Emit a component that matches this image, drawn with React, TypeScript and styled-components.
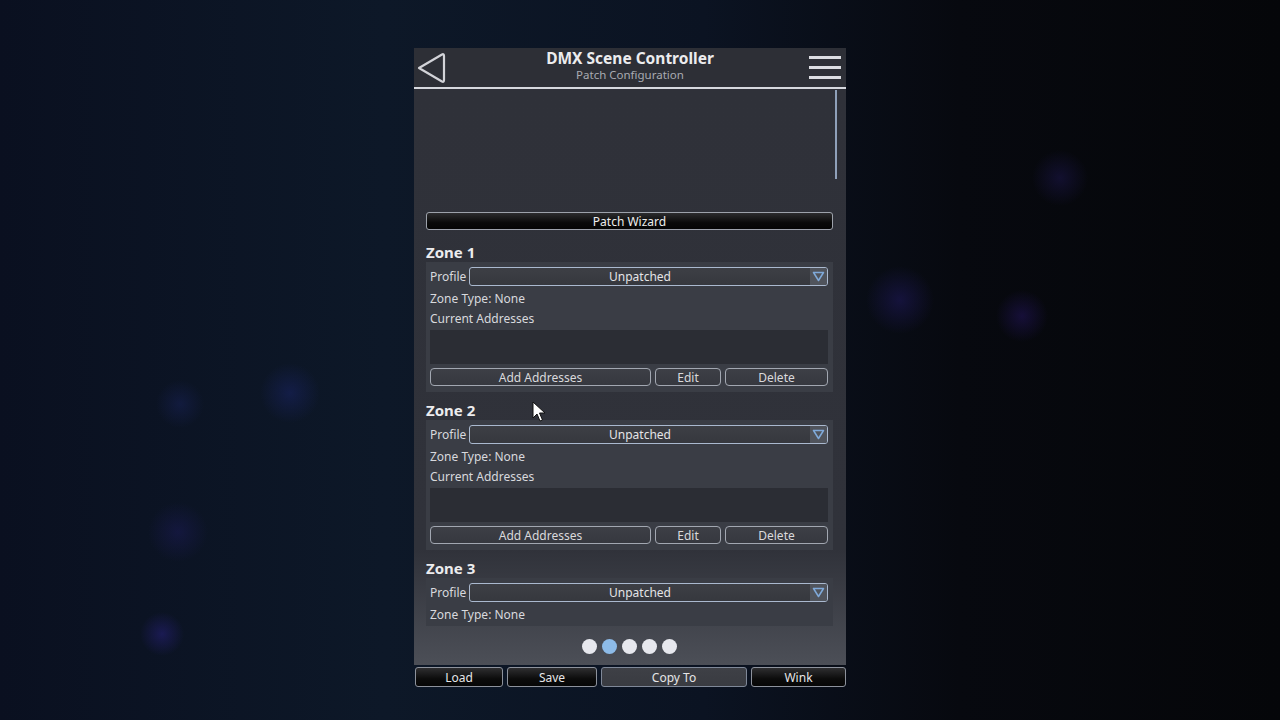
import React from "react";
import styled, { createGlobalStyle } from "styled-components";

const GlobalStyle = createGlobalStyle`
  html, body {
    margin: 0;
    padding: 0;
    height: 720px;
    overflow: hidden;
  }
  body {
    font-family: "Noto Sans", "DejaVu Sans", sans-serif;
    background-color: #080c15;
    background-image:
      radial-gradient(circle at 1060px 178px, rgba(40, 30, 110, 0.35) 0, rgba(40, 30, 110, 0) 28px),
      radial-gradient(circle at 900px 300px, rgba(40, 30, 120, 0.4) 0, rgba(40, 30, 120, 0) 34px),
      radial-gradient(circle at 1022px 316px, rgba(45, 25, 120, 0.4) 0, rgba(45, 25, 120, 0) 26px),
      radial-gradient(circle at 180px 404px, rgba(30, 40, 110, 0.35) 0, rgba(30, 40, 110, 0) 24px),
      radial-gradient(circle at 290px 393px, rgba(30, 40, 120, 0.4) 0, rgba(30, 40, 120, 0) 30px),
      radial-gradient(circle at 178px 532px, rgba(35, 30, 110, 0.35) 0, rgba(35, 30, 110, 0) 30px),
      radial-gradient(circle at 162px 634px, rgba(45, 35, 140, 0.45) 0, rgba(45, 35, 140, 0) 22px),
      linear-gradient(90deg, #0a1020 0%, #0d1828 30%, #0b1322 55%, #07090f 75%, #050609 100%);
  }
`;

const Stage = styled.div`
  width: 1280px;
  height: 720px;
  padding: 48px 0 0 414px;
  box-sizing: border-box;
`;

const Phone = styled.div`
  width: 432px;
  height: 640px;
  display: flex;
  flex-direction: column;
`;

const Header = styled.header`
  height: 39px;
  background: #2d2f36;
  border-bottom: 2px solid #d6d8de;
  display: flex;
  align-items: center;
  justify-content: space-between;
  padding: 0 4px 0 0;
`;

const TitleBlock = styled.div`
  display: flex;
  flex-direction: column;
  align-items: center;
  margin: -5px 0 0 4px;
`;

const Title = styled.div`
  font-size: 15.5px;
  font-weight: 700;
  color: #ececee;
  line-height: 18px;
`;

const Subtitle = styled.div`
  font-size: 11.5px;
  color: #a9abb2;
  line-height: 15px;
`;

const IconButton = styled.div`
  width: 34px;
  height: 34px;
  display: flex;
  align-items: center;
  justify-content: center;
`;

const Panel = styled.div`
  flex: 1;
  display: flex;
  flex-direction: column;
  position: relative;
  background: linear-gradient(180deg, #2f3139 0%, #30323a 80%, #4c4f57 100%);
`;

const ScrollIndicator = styled.div`
  position: absolute;
  right: 9px;
  top: 1px;
  width: 2px;
  height: 89px;
  background: #8fa0b9;
`;

const Viewport = styled.div`
  height: 537px;
  overflow: hidden;
  padding: 123px 13px 0 12px;
  box-sizing: border-box;
`;

const WizardButton = styled.div`
  height: 18px;
  border: 1px solid #9da2ab;
  border-radius: 3px;
  background: linear-gradient(180deg, #2c2c2e 0%, #0a0a0a 60%, #050505 100%);
  color: #eeeeee;
  font-size: 12px;
  display: flex;
  align-items: center;
  justify-content: center;
  box-sizing: border-box;
`;

const ZoneBlock = styled.section`
  margin-top: 9px;
  &:first-of-type {
    margin-top: 13px;
  }
`;

const ZoneTitle = styled.h2`
  margin: 0;
  height: 19px;
  font-size: 15px;
  line-height: 19px;
  font-weight: 700;
  color: #ececee;
`;

const Card = styled.div`
  background: #3a3d45;
  padding: 5px 5px 6px 4px;
`;

const ProfileRow = styled.div`
  display: flex;
  align-items: center;
  height: 19px;
  gap: 4px;
  margin-bottom: 2px;
`;

const Label = styled.span`
  font-size: 12px;
  color: #d8d9dd;
  width: 35px;
`;

const Select = styled.div`
  flex: 1;
  height: 19px;
  border: 1px solid #aab9cf;
  border-radius: 3px;
  background: linear-gradient(180deg, #3d3f45 0%, #36383e 100%);
  display: flex;
  align-items: stretch;
  box-sizing: border-box;
  overflow: hidden;
`;

const SelectText = styled.span`
  flex: 1;
  font-size: 12px;
  color: #e4e4e6;
  display: flex;
  align-items: center;
  justify-content: center;
`;

const Arrow = styled.span`
  width: 17px;
  background: #50545c;
  display: flex;
  align-items: center;
  justify-content: center;
`;

const InfoLine = styled.div`
  height: 20px;
  font-size: 12px;
  line-height: 21px;
  color: #d8d9dd;
`;

const AddressBox = styled.div`
  height: 34px;
  margin-top: 2px;
  background: #2b2d34;
`;

const ButtonRow = styled.div`
  display: grid;
  grid-template-columns: 221px 66px 1fr;
  gap: 4px;
  margin-top: 4px;
`;

const CardButton = styled.div`
  height: 18px;
  border: 1px solid #a2a7b1;
  border-radius: 4px;
  background: linear-gradient(180deg, #3d3f46 0%, #36383f 100%);
  color: #d9d9dc;
  font-size: 12px;
  display: flex;
  align-items: center;
  justify-content: center;
  box-sizing: border-box;
`;

const Dots = styled.div`
  flex: 1;
  display: flex;
  align-items: center;
  justify-content: center;
  gap: 5px;
  padding: 1px 2px 0 0;
`;

const Dot = styled.span<{ $active?: boolean }>`
  width: 15px;
  height: 15px;
  border-radius: 50%;
  background: ${(p) => (p.$active ? "#8dbbe8" : "#e7e8ee")};
`;

const Footer = styled.footer`
  display: grid;
  grid-template-columns: 88px 90px 146px 1fr;
  gap: 4px;
  padding: 2px 0 1px 1px;
  height: 23px;
  box-sizing: border-box;
`;

const FooterButton = styled.div<{ $selected?: boolean }>`
  height: 20px;
  border: 1px solid ${(p) => (p.$selected ? "#7f8898" : "#8d929c")};
  border-radius: 3px;
  background: ${(p) =>
    p.$selected
      ? "linear-gradient(180deg, #3e4046 0%, #393b41 100%)"
      : "linear-gradient(180deg, #2e2e30 0%, #0c0c0c 60%, #060606 100%)"};
  color: #e6e6e8;
  font-size: 12px;
  display: flex;
  align-items: center;
  justify-content: center;
  box-sizing: border-box;
`;

const Cursor = styled.svg`
  position: absolute;
  left: 118px;
  top: 312px;
`;

const BackIcon = () => (
  <svg width="32" height="36" viewBox="0 0 32 36">
    <path
      d="M4 18 L27 4.5 Q29 3.5 29 6 L29 30 Q29 32.5 27 31.5 Z"
      fill="none"
      stroke="#d2d3d8"
      strokeWidth="2.2"
      strokeLinejoin="round"
    />
  </svg>
);

const MenuIcon = () => (
  <svg width="34" height="30" viewBox="0 0 34 30">
    <rect x="1" y="3" width="32" height="3" fill="#dcdde2" />
    <rect x="1" y="13" width="32" height="3" fill="#dcdde2" />
    <rect x="1" y="23" width="32" height="3" fill="#dcdde2" />
  </svg>
);

const DropArrow = () => (
  <svg width="13" height="11" viewBox="0 0 13 11">
    <path
      d="M1.5 1.5 L11.5 1.5 L6.5 9.5 Z"
      fill="none"
      stroke="#7fa9d9"
      strokeWidth="1.5"
      strokeLinejoin="round"
    />
  </svg>
);

interface ZoneProps {
  n: number;
  partial?: boolean;
}

function Zone({ n, partial }: ZoneProps) {
  return (
    <ZoneBlock>
      <ZoneTitle>Zone {n}</ZoneTitle>
      <Card>
        <ProfileRow>
          <Label>Profile</Label>
          <Select>
            <SelectText>Unpatched</SelectText>
            <Arrow>
              <DropArrow />
            </Arrow>
          </Select>
        </ProfileRow>
        <InfoLine>Zone Type: None</InfoLine>
        {!partial && (
          <>
            <InfoLine>Current Addresses</InfoLine>
            <AddressBox />
            <ButtonRow>
              <CardButton>Add Addresses</CardButton>
              <CardButton>Edit</CardButton>
              <CardButton>Delete</CardButton>
            </ButtonRow>
          </>
        )}
      </Card>
    </ZoneBlock>
  );
}

export default function App() {
  return (
    <>
      <GlobalStyle />
      <Stage>
        <Phone>
          <Header>
            <IconButton>
              <BackIcon />
            </IconButton>
            <TitleBlock>
              <Title>DMX Scene Controller</Title>
              <Subtitle>Patch Configuration</Subtitle>
            </TitleBlock>
            <IconButton>
              <MenuIcon />
            </IconButton>
          </Header>
          <Panel>
            <ScrollIndicator />
            <Viewport>
              <WizardButton>Patch Wizard</WizardButton>
              <Zone n={1} />
              <Zone n={2} />
              <Zone n={3} partial />
            </Viewport>
            <Dots>
              <Dot />
              <Dot $active />
              <Dot />
              <Dot />
              <Dot />
            </Dots>
            <Cursor width="14" height="22" viewBox="0 0 14 22">
              <path
                d="M1 1 L1 17 L5 13 L8 20 L10.5 19 L7.5 12 L13 12 Z"
                fill="#ffffff"
                stroke="#111"
                strokeWidth="1"
                strokeLinejoin="round"
              />
            </Cursor>
          </Panel>
          <Footer>
            <FooterButton>Load</FooterButton>
            <FooterButton>Save</FooterButton>
            <FooterButton $selected>Copy To</FooterButton>
            <FooterButton>Wink</FooterButton>
          </Footer>
        </Phone>
      </Stage>
    </>
  );
}
